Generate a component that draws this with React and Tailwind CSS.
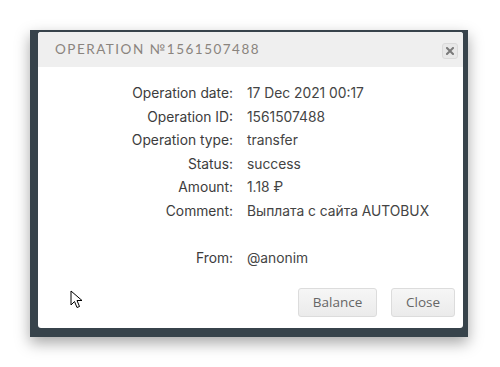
import React from "react";

const rows = [
  ["Operation date:", "17 Dec 2021 00:17"],
  ["Operation ID:", "1561507488"],
  ["Operation type:", "transfer"],
  ["Status:", "success"],
  ["Amount:", "1.18 ₽"],
  ["Comment:", "Выплата с сайта AUTOBUX"],
];

const App = () => {
  return (
    <div className="relative w-[500px] h-[367px] bg-white pt-[30px] pl-[30px] overflow-hidden">
      <div className="w-[438px] h-[307px] bg-[#37434b] pt-[2px] pl-[8px] pr-[5px] pb-[9px] shadow-[0_6px_14px_rgba(0,0,0,0.35)]">
        <div className="h-full bg-white rounded-[3px] flex flex-col overflow-hidden">
          {/* header */}
          <div className="h-[35px] bg-[#efefef] flex items-center justify-between pl-[17px] pr-[5px]">
            <div
              className="text-[13.5px] tracking-[1.5px] text-[#8a847e]"
              style={{ fontFamily: "'Lato', 'DejaVu Sans', sans-serif" }}
            >
              OPERATION №1561507488
            </div>
            <button className="w-[16px] h-[16px] mt-[2px] rounded-[3px] bg-[#e8e8e8] border border-[#dadada] flex items-center justify-center">
              <svg width="8" height="8" viewBox="0 0 8 8">
                <path d="M1 1L7 7M7 1L1 7" stroke="#7a7a7a" strokeWidth="2" strokeLinecap="square" />
              </svg>
            </button>
          </div>

          {/* body */}
          <div
            className="pt-[15px] text-[13.8px] text-[#3c3c3c]"
            style={{ fontFamily: "'Inter', 'Liberation Sans', sans-serif" }}
          >
            {rows.map(([label, value]) => (
              <div key={label} className="flex h-[23.5px] items-center">
                <div className="w-[195px] text-right">{label}</div>
                <div className="pl-[14px] text-[#444]">{value}</div>
              </div>
            ))}
            <div className="h-[23.5px]" />
            <div className="flex h-[23.5px] items-center">
              <div className="w-[195px] text-right">From:</div>
              <div className="pl-[14px] text-[#444]">@anonim</div>
            </div>
          </div>

          {/* footer */}
          <div
            className="flex justify-end gap-[14px] pr-[8px] mt-[18px] text-[13.5px] text-[#666]"
            style={{ fontFamily: "'Open Sans', 'DejaVu Sans', sans-serif" }}
          >
            <button className="w-[79px] h-[29px] rounded-[3px] border border-[#dcdcdc] bg-gradient-to-b from-[#f6f6f6] to-[#ebebeb]">
              Balance
            </button>
            <button className="w-[64px] h-[29px] rounded-[3px] border border-[#dcdcdc] bg-gradient-to-b from-[#f6f6f6] to-[#ebebeb]">
              Close
            </button>
          </div>
        </div>
      </div>

      {/* mouse pointer */}
      <svg className="absolute left-[70px] top-[290px]" width="13" height="19" viewBox="0 0 13 19">
        <path
          d="M1 1 L1 15 L4.5 11.5 L7 17.5 L9.5 16.5 L7 10.5 L12 10.5 Z"
          fill="#fff"
          stroke="#000"
          strokeWidth="1"
          strokeLinejoin="miter"
        />
      </svg>
    </div>
  );
};

export default App;
